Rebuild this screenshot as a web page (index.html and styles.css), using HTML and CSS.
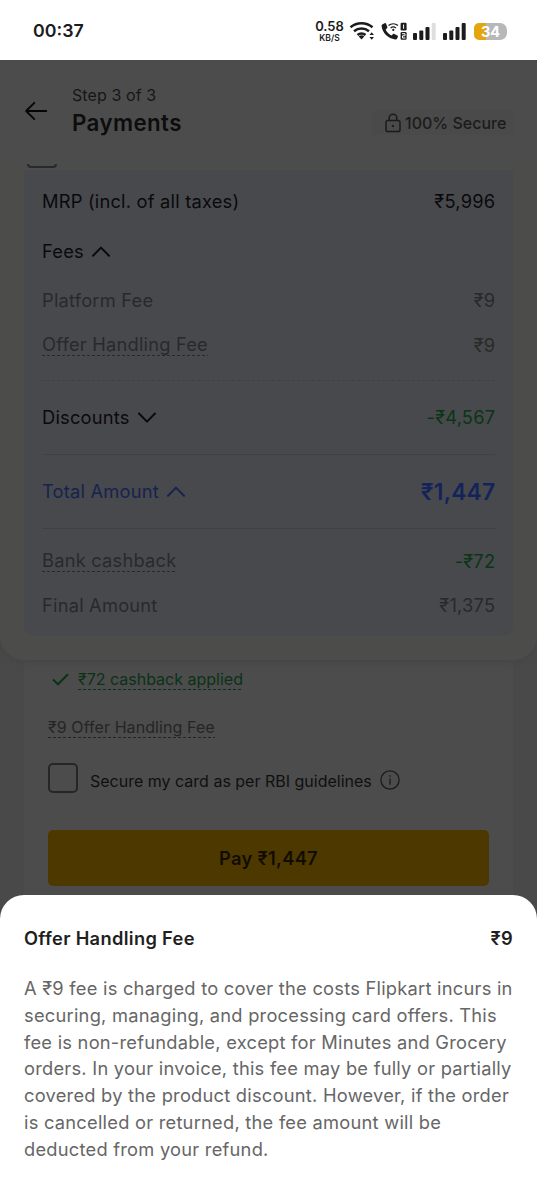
FILE: index.html
```
<!DOCTYPE html>
<html lang="en">
<head>
<meta charset="utf-8">
<title>Payments</title>
<link rel="stylesheet" href="styles.css">
</head>
<body>
<div class="status">
  <span class="clock">00:37</span>
  <div class="status-right">
    <div class="speed"><b>0.58</b><span>KB/S</span></div>
    <svg class="wifi" width="27" height="20" viewBox="0 0 27 20" fill="none" stroke="#1c1c1c" stroke-width="2.5">
      <path d="M1.500 6.200a17 17 0 0 1 22 0M5 10.300a11.500 11.500 0 0 1 15 0M8.500 14a6.300 6.300 0 0 1 8 0"/>
      <path d="M9.700 15.400a4.200 4.200 0 0 1 5.600 0l-2.800 3z" fill="#1c1c1c" stroke="none"/>
      <path d="M20.500 14l2.200-2.800 2.200 2.800zM20.500 16l2.200 2.800 2.200-2.800z" fill="#1c1c1c" stroke="none"/>
    </svg>
    <svg class="call" width="27" height="20" viewBox="0 0 27 20">
      <path d="M1.600 3.200 3.600 2.200c.7-.3 1.200 0 1.500.6l1.200 3c.2.600.1 1-.3 1.400L4.700 8.500c1.100 2.700 3.200 4.800 6 6l1.300-1.400c.4-.4.8-.5 1.400-.2l2.900 1.500c.6.300.8.800.6 1.400l-.8 1.700c-.4.800-1 1.100-1.900.9C7 17.600 1.200 11.800.6 5c0-.9.300-1.400 1-1.800z" fill="#1c1c1c"/>
      <path d="M7.500 4.600a7.500 7.500 0 0 1 9.500 0M9.600 6.900a4.300 4.300 0 0 1 5.300 0" fill="none" stroke="#1c1c1c" stroke-width="1.300"/>
      <circle cx="12.300" cy="8.900" r="1.100" fill="#1c1c1c"/>
      <rect x="19.600" y="1.800" width="6" height="7.700" rx="1.200" fill="#1c1c1c"/>
      <rect x="19.600" y="11" width="6" height="7.700" rx="1.200" fill="#1c1c1c"/>
      <path d="M22.600 3.500v4.300M21 12.700h3v2.100h-2.500v2.200h3" fill="none" stroke="#fff" stroke-width="1"/>
    </svg>
    <svg class="signal" width="24" height="20" viewBox="0 0 24 20" fill="#1c1c1c">
      <rect x="0" y="12" width="4" height="7" rx="1"/><rect x="6.300" y="9.500" width="4" height="9.500" rx="1"/><rect x="12.500" y="6" width="4" height="13" rx="1"/><rect x="18.700" y="2" width="4" height="17" rx="1" fill="#dedede"/>
    </svg>
    <svg class="signal" width="24" height="20" viewBox="0 0 24 20" fill="#1c1c1c">
      <rect x="0" y="12" width="4" height="7" rx="1"/><rect x="6.300" y="9.500" width="4" height="9.500" rx="1"/><rect x="12.500" y="6" width="4" height="13" rx="1"/><rect x="18.700" y="2" width="4" height="17" rx="1"/>
    </svg>
    <div class="battery"><span>34</span></div>
  </div>
</div>
<main class="page">
  <header class="header">
    <svg class="back" width="24" height="20" viewBox="0 0 24 20" fill="none" stroke="#050505" stroke-width="1.800" stroke-linecap="round" stroke-linejoin="round"><path d="M22.300 10H2.300M10.300 1.800 2.100 10l8.200 8.200"/></svg>
    <div class="titles"><div class="step">Step 3 of 3</div><h1>Payments</h1></div>
    <div class="secure">
      <svg width="16" height="20" viewBox="0 0 16 20" fill="none" stroke="#1b1b1b" stroke-width="1.500"><rect x="1" y="7.500" width="14" height="11" rx="1.800"/><path d="M4.200 7.500V5a3.800 3.800 0 0 1 7.600 0v2.500"/><rect x="7.200" y="12.200" width="1.600" height="1.600" fill="#1b1b1b" stroke-width=".5"/></svg>
      <span>100% Secure</span>
    </div>
  </header>
  <section class="panel">
    <div class="peek"><i></i></div>
    <div class="box">
      <div class="row tall"><span>MRP (incl. of all taxes)</span><span>₹5,996</span></div>
      <div class="row tall"><span>Fees</span><svg class="chev" width="18" height="11" viewBox="0 0 18 11"><path d="M1 9.700 9 1.600l8 8.100"/></svg></div>
      <div class="row muted first"><span>Platform Fee</span><span>₹9</span></div>
      <div class="row muted"><span class="dash">Offer Handling Fee</span><span>₹9</span></div>
      <div class="row big dotted"><span>Discounts</span><svg class="chev" width="18" height="11" viewBox="0 0 18 11"><path d="M1 1.500 9 9.600l8-8.100"/></svg><span class="green">-₹4,567</span></div>
      <div class="row big total"><span>Total Amount</span><svg class="chev" width="18" height="11" viewBox="0 0 18 11"><path d="M1 9.700 9 1.600l8 8.100"/></svg><span class="sum">₹1,447</span></div>
      <div class="row muted cashback"><span class="dash">Bank cashback</span><span class="green">-₹72</span></div>
      <div class="row muted final"><span>Final Amount</span><span>₹1,375</span></div>
    </div>
  </section>
  <section class="card">
    <div class="applied"><svg width="17" height="13" viewBox="0 0 17 13" fill="none" stroke="#0b3217" stroke-width="2"><path d="M1 6.500 6 11.300 16 1.300"/></svg><span class="dash">₹72 cashback applied</span></div>
    <div class="fee"><span class="dash">₹9 Offer Handling Fee</span></div>
    <div class="consent"><i class="check"></i><span>Secure my card as per RBI guidelines</span>
      <svg width="20" height="20" viewBox="0 0 20 20" fill="none" stroke="#1b1b1b" stroke-width="1.300"><circle cx="10" cy="10" r="9.100"/><path d="M10 8.500v6.200M10 5.300v1.500"/></svg></div>
    <button class="pay">Pay ₹1,447</button>
  </section>
</main>
<aside class="sheet">
  <div class="sheet-head"><h2>Offer Handling Fee</h2><b>₹9</b></div>
  <p>A ₹9 fee is charged to cover the costs Flipkart incurs in<br>securing, managing, and processing card offers. This<br>fee is non-refundable, except for Minutes and Grocery<br>orders. In your invoice, this fee may be fully or partially<br>covered by the product discount. However, if the order<br>is cancelled or returned, the fee amount will be<br>deducted from your refund.</p>
</aside>
</body>
</html>
```
FILE: styles.css
```
* { box-sizing: border-box; }
body { margin: 0; height: 1199px; overflow: hidden; position: relative; background: #fff; font-family: Inter, "Noto Sans", sans-serif; color: #0a0a0c; }
h1, h2, p { margin: 0; }
svg { flex: none; display: block; }

.status { height: 60px; padding: 2px 30px 0 33px; display: flex; align-items: center; justify-content: space-between; color: #1c1c1c; }
.clock { font-size: 17.800px; font-weight: 600; margin-top: -2px; }
.status-right { display: flex; align-items: center; }
.speed { width: 29px; margin-right: 1px; display: flex; flex-direction: column; align-items: center; font-weight: 600; }
.speed b { font-size: 13px; line-height: 13px; font-weight: 600; }
.speed span { font-size: 8.500px; line-height: 10px; }
.wifi { margin-left: 4px; }
.call { margin-left: 5px; }
.signal { margin-left: 5px; }
.signal + .signal { margin-left: 6px; }
.battery { width: 33px; height: 17px; margin-left: 7px; border-radius: 5px 7px 7px 5px; background: linear-gradient(90deg, #e5a50f 12px, #b8b8b8 12px); color: #fff; font-size: 14.500px; font-weight: 700; line-height: 17px; text-align: center; }

.page { height: 1139px; background: #494949; overflow: hidden; }
.header { height: 104px; padding: 0 24px; display: flex; align-items: flex-start; background: #4c4c4c; position: relative; z-index: 1; }
.back { margin-top: 41px; }
.titles { margin: 24px 0 0 24px; flex: 1; }
.step { font-size: 16px; line-height: 22px; color: #161616; letter-spacing: .1px; }
h1 { font-size: 22.300px; line-height: 30px; margin-top: 2px; font-weight: 600; letter-spacing: .4px; color: #0d0d0d; }
.secure { margin-top: 51px; width: 141px; height: 24px; padding-left: 13px; display: flex; align-items: center; gap: 4px; border-radius: 3px; background: #4a4a4a; color: #1b1b1b; font-size: 16px; font-weight: 500; white-space: nowrap; }

.panel { height: 496px; padding: 0 24px; background: #4c4c4b; border-radius: 0 0 24px 24px; box-shadow: 0 2px 9px #454545; position: relative; }
.peek { height: 6px; padding-left: 3px; }
.peek i { display: block; width: 30px; height: 4px; border: 2px solid #29282b; border-top: 0; border-radius: 0 0 4px 4px; }
.box { height: 466px; padding: 6px 18px 0; border-radius: 0 0 10px 10px; background: #48494c; }
.row { height: 45px; display: flex; align-items: center; font-size: 18.300px; letter-spacing: .21px; white-space: nowrap; }
.row > span:last-child { margin-left: auto; margin-right: -.3px; }
.tall { height: 50px; }
.muted { color: #28292b; }
.first { margin-top: 2px; height: 44px; }
.big { height: 74px; padding-bottom: 1px; }
.dotted { margin-top: 13px; border-top: 1px dashed #404144; border-bottom: 1px solid #404144; height: 75px; }
.chev { margin: 0 0 0 8.500px; fill: none; stroke: currentColor; stroke-width: 2; stroke-linejoin: round; stroke-linecap: round; }
.green { color: #0b3516; }
.total { color: #162350; border-bottom: 1px solid #404144; }
.row .sum { font-size: 22.800px; font-weight: 600; color: #15235b; }
.cashback { margin-top: 9px; }
.final { height: 44px; }
.dash { padding-bottom: 1px; background: repeating-linear-gradient(90deg, currentColor 0 3px, transparent 3px 5px) 0 100% / 100% 1px no-repeat; }

.card { height: 300px; margin: 0 24px; padding: 0 24px; background: #4c4c4c; }
.applied { height: 38px; padding-left: 4px; display: flex; align-items: center; gap: 9px; font-size: 16px; color: #0b3217; }
.fee { height: 24px; margin-top: 17px; display: flex; align-items: center; font-size: 16px; letter-spacing: .08px; color: #252525; }
.consent { margin-top: 23px; height: 34px; display: flex; align-items: flex-start; font-size: 16px; color: #101010; white-space: nowrap; }
.consent span { margin: 9px 0 0 12px; line-height: 20px; }
.consent svg { margin: 8px 0 0 8px; }
.check { flex: none; width: 30px; height: 30px; margin-top: 1px; border: 2px solid #24272a; border-radius: 5px; }
.pay { display: block; width: 441px; height: 56px; margin-top: 34px; padding: 0; border: 0; border-radius: 5px; background: #4d3900; color: #120d00; font: 600 18.300px Inter, "Noto Sans", sans-serif; letter-spacing: .3px; }

.sheet { position: absolute; left: 0; right: 0; bottom: 0; height: 304px; padding: 30px 24px 0; border-radius: 24px 24px 0 0; background: #fff; color: #1f1f1f; }
.sheet-head { height: 26px; display: flex; align-items: center; justify-content: space-between; }
.sheet-head h2, .sheet-head b { font-size: 18.300px; font-weight: 600; letter-spacing: .32px; }
.sheet p { margin-top: 24px; font-size: 18.300px; letter-spacing: .24px; line-height: 26.830px; color: #666; white-space: nowrap; }
```
